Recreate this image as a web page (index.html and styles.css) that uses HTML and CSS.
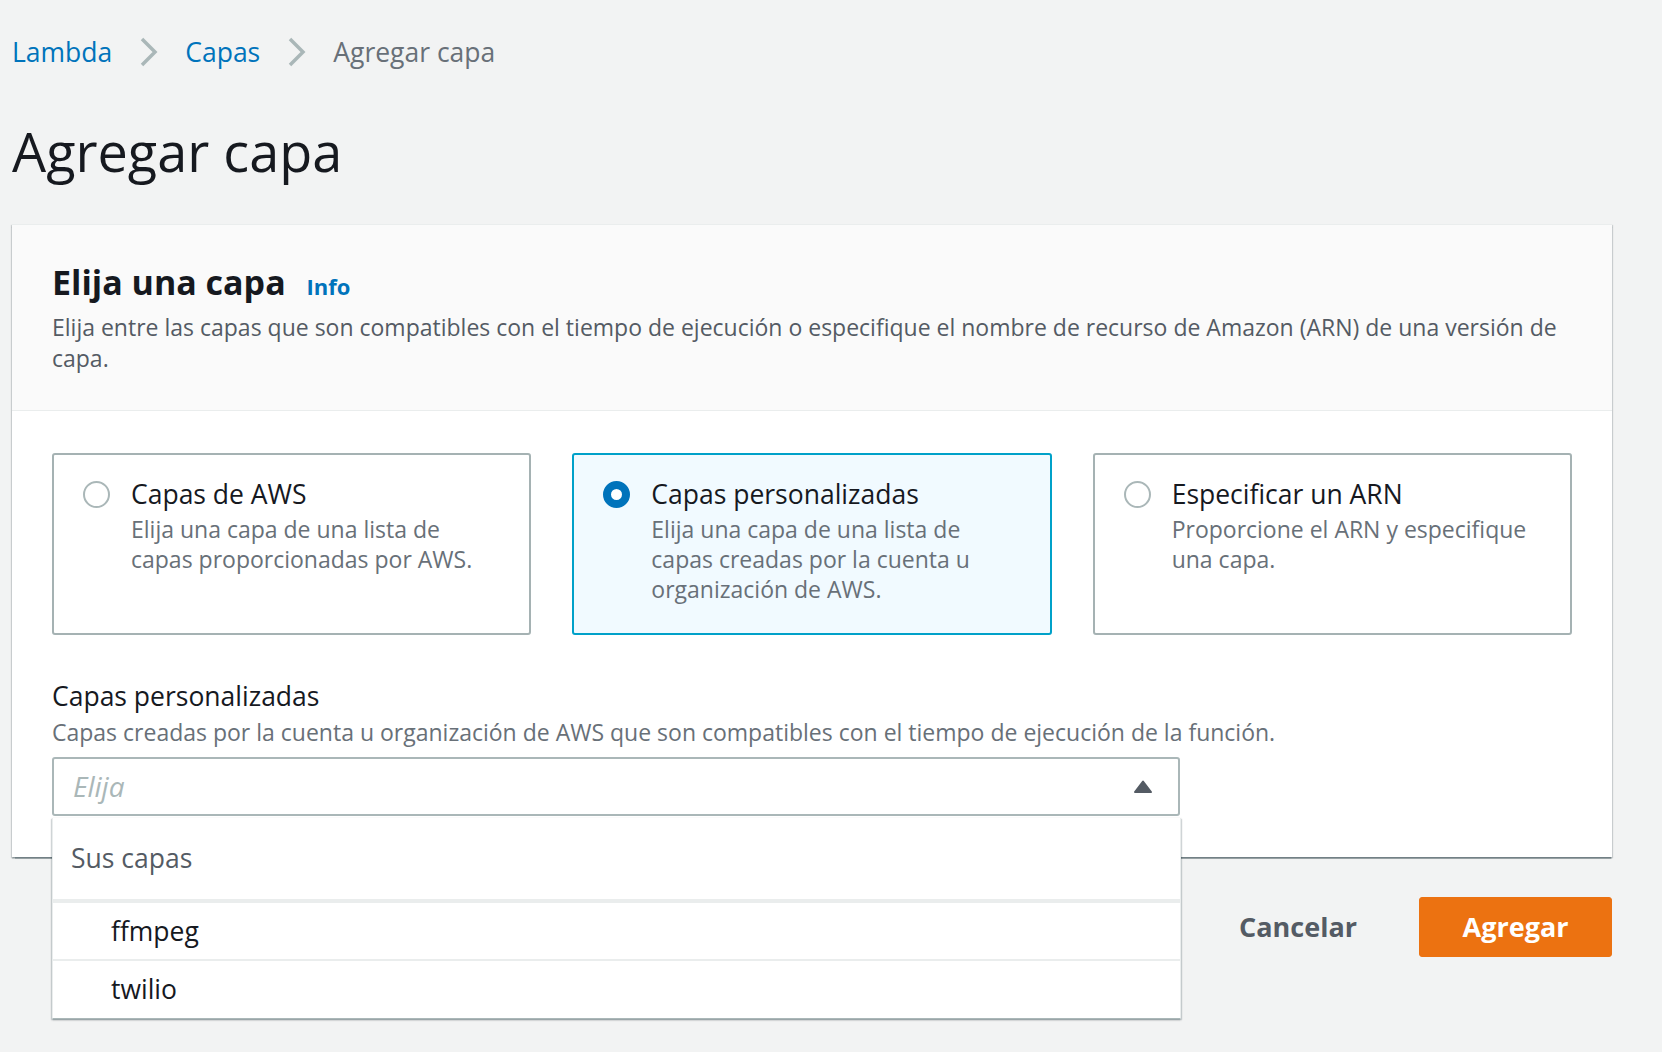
FILE: index.html
```html
<!DOCTYPE html>
<html lang="es">
<head>
<meta charset="utf-8">
<title>Agregar capa</title>
<link rel="stylesheet" href="styles.css">
</head>
<body>
<div class="page">
  <nav class="breadcrumbs">
    <a class="crumb-link" href="#">Lambda</a>
    <svg class="crumb-sep" width="18" height="30" viewBox="0 0 18 30"><polyline points="2,2 15,15 2,28" fill="none" stroke="#aab7b8" stroke-width="3.5"/></svg>
    <a class="crumb-link" href="#">Capas</a>
    <svg class="crumb-sep" width="18" height="30" viewBox="0 0 18 30"><polyline points="2,2 15,15 2,28" fill="none" stroke="#aab7b8" stroke-width="3.5"/></svg>
    <span class="crumb-current">Agregar capa</span>
  </nav>

  <h1 class="page-title">Agregar capa</h1>

  <section class="container">
    <header class="container-header">
      <h2 class="container-title">Elija una capa <a class="info-link" href="#">Info</a></h2>
      <p class="container-desc">Elija entre las capas que son compatibles con el tiempo de ejecución o especifique el nombre de recurso de Amazon (ARN) de una versión de capa.</p>
    </header>

    <div class="container-body">
      <div class="tiles">
        <div class="tile">
          <span class="radio"></span>
          <div class="tile-text">
            <div class="tile-label">Capas de AWS</div>
            <div class="tile-desc">Elija una capa de una lista de capas proporcionadas por AWS.</div>
          </div>
        </div>
        <div class="tile tile-selected">
          <span class="radio radio-checked"></span>
          <div class="tile-text">
            <div class="tile-label">Capas personalizadas</div>
            <div class="tile-desc">Elija una capa de una lista de capas creadas por la cuenta u organización de AWS.</div>
          </div>
        </div>
        <div class="tile">
          <span class="radio"></span>
          <div class="tile-text">
            <div class="tile-label">Especificar un ARN</div>
            <div class="tile-desc">Proporcione el ARN y especifique una capa.</div>
          </div>
        </div>
      </div>

      <div class="field">
        <div class="field-label">Capas personalizadas</div>
        <div class="field-desc">Capas creadas por la cuenta u organización de AWS que son compatibles con el tiempo de ejecución de la función.</div>
        <div class="select-wrap">
          <div class="select">
            <span class="placeholder">Elija</span>
            <svg class="caret" width="20" height="15" viewBox="0 0 20 15"><path d="M2 13 L10 2.5 L18 13 Z" fill="#545b64" stroke="#545b64" stroke-width="2" stroke-linejoin="round"/></svg>
          </div>
          <div class="dropdown">
            <div class="group-header">Sus capas</div>
            <div class="option">ffmpeg</div>
            <div class="option option-sep">twilio</div>
          </div>
        </div>
      </div>
    </div>
  </section>

  <div class="actions">
    <button class="btn btn-link" type="button">Cancelar</button>
    <button class="btn btn-primary" type="button">Agregar</button>
  </div>
</div>
</body>
</html>
```

FILE: styles.css
```css
* { box-sizing: border-box; }

html, body {
  margin: 0;
  padding: 0;
  background: #f2f3f3;
  font-family: "Open Sans", "Noto Sans", sans-serif;
  color: #16191f;
}

.page {
  min-height: 1052px;
  padding: 32px 50px 0 12px;
}

.breadcrumbs {
  display: flex;
  align-items: center;
  height: 40px;
  font-size: 26.5px;
  line-height: 40px;
}

.crumb-link {
  color: #0073bb;
  text-decoration: none;
}

.crumb-sep {
  margin: 0 27px 0 28px;
  display: block;
}

.crumb-current {
  color: #687078;
}

.page-title {
  margin: 49px 0 43px;
  font-size: 54px;
  line-height: 60px;
  font-weight: 400;
  color: #16191f;
}

.container {
  background: #ffffff;
  border-top: 1px solid #eaeded;
  box-shadow: 0 1.5px 1px 0 rgba(0, 28, 36, 0.35), 1px 1px 1px 0 rgba(0, 28, 36, 0.15), -1px 1px 1px 0 rgba(0, 28, 36, 0.15);
}

.container-header {
  background: #fafafa;
  border-bottom: 1px solid #eaeded;
  padding: 35px 30px 36px 40px;
}

.container-title {
  margin: 0;
  font-size: 34px;
  line-height: 44px;
  font-weight: 700;
  color: #16191f;
}

.info-link {
  margin-left: 12px;
  font-size: 22px;
  font-weight: 700;
  color: #0073bb;
  text-decoration: none;
}

.container-desc {
  margin: 4px 0 0;
  font-size: 23px;
  line-height: 31px;
  color: #545b64;
}

.container-body {
  padding: 42px 40px 41px 40px;
}

.tiles {
  display: grid;
  grid-template-columns: 1fr 1fr 1fr;
  column-gap: 41px;
}

.tile {
  display: flex;
  align-items: flex-start;
  min-height: 182px;
  padding: 21px 28px 17px 29px;
  border: 2px solid #a5b2b3;
  border-radius: 3px;
  background: #ffffff;
}

.tile-selected {
  border-color: #00a1c9;
  background: #f1faff;
}

.radio {
  flex: none;
  width: 27px;
  height: 27px;
  margin-top: 5px;
  margin-right: 21px;
  border: 2px solid #aab7b8;
  border-radius: 50%;
  background: #ffffff;
}

.radio-checked {
  border: 8.5px solid #0073bb;
}

.tile-label {
  font-size: 26.5px;
  line-height: 36px;
  color: #16191f;
}

.tile-desc {
  margin-top: 2px;
  font-size: 23px;
  line-height: 30px;
  color: #687078;
}

.field {
  margin-top: 43px;
}

.field-label {
  font-size: 26.5px;
  line-height: 36px;
  color: #16191f;
}

.field-desc {
  margin-top: 3px;
  font-size: 23px;
  line-height: 31.5px;
  color: #687078;
}

.select-wrap {
  position: relative;
  width: 1128px;
  margin-top: 8px;
}

.select {
  display: flex;
  align-items: center;
  justify-content: space-between;
  height: 59px;
  padding: 0 25px 0 19px;
  border: 2px solid #aab7b8;
  border-radius: 3px;
  background: #ffffff;
}

.placeholder {
  font-size: 28px;
  font-style: italic;
  color: #aab7b8;
}

.caret {
  display: block;
}

.dropdown {
  position: absolute;
  z-index: 10;
  top: calc(100% + 2px);
  left: 0;
  right: -1px;
  background: #ffffff;
  border: 1px solid #eaeded;
  border-top: none;
  border-bottom: 1px solid #aab7b8;
  box-shadow: 0 1px 2px 0 rgba(0, 28, 36, 0.3), 1px 1px 1px 0 rgba(0, 28, 36, 0.1), -1px 1px 1px 0 rgba(0, 28, 36, 0.1);
}

.group-header {
  display: flex;
  align-items: center;
  height: 85px;
  padding-left: 18px;
  border-bottom: 4px solid #eaeded;
  font-size: 26.5px;
  color: #545b64;
}

.option {
  display: flex;
  align-items: center;
  height: 56px;
  padding-left: 58px;
  font-size: 26.5px;
  color: #16191f;
}

.option-sep {
  height: 59px;
  border-top: 2px solid #eaeded;
}

.actions {
  display: flex;
  justify-content: flex-end;
  align-items: center;
  margin-top: 40px;
  gap: 22px;
}

.btn {
  height: 60px;
  font-family: "Open Sans", "Noto Sans", sans-serif;
  font-size: 27px;
  font-weight: 700;
  border-radius: 3px;
  cursor: pointer;
}

.btn-link {
  padding: 0 40px;
  background: transparent;
  border: none;
  color: #545b64;
}

.btn-primary {
  width: 193px;
  padding: 0;
  background: #ec7211;
  border: 1px solid #ec7211;
  color: #ffffff;
}
```
